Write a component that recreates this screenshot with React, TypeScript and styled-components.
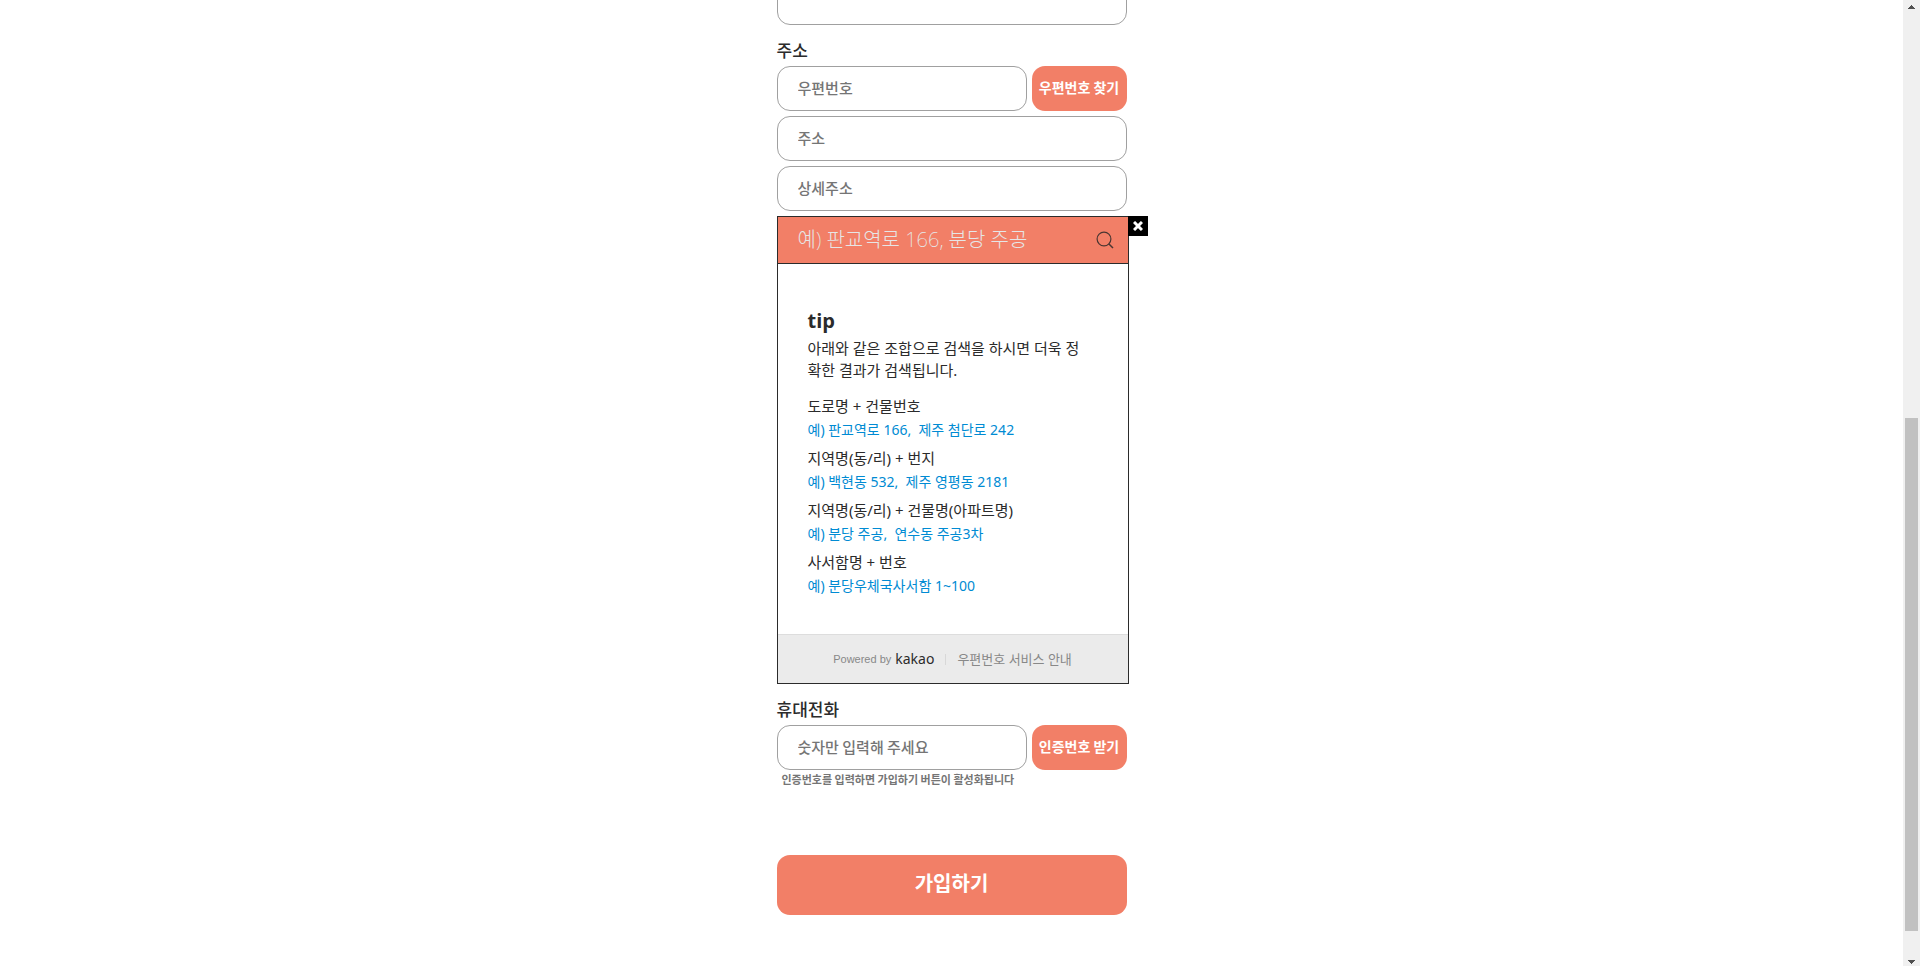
import React from "react";
import styled, { createGlobalStyle } from "styled-components";

const CORAL = "#f27f67";
const INK = "#2b2b2b";

const GlobalStyle = createGlobalStyle`
  *, *::before, *::after { box-sizing: border-box; }
  body {
    margin: 0;
    background: #fff;
    color: ${INK};
    font-family: "Noto Sans CJK KR", sans-serif;
  }
  input, button { font-family: inherit; }
`;

const Page = styled.div`
  display: flex;
  height: 100vh;
  overflow: hidden;
`;

const Main = styled.main`
  flex: 1;
  display: flex;
  justify-content: center;
  align-items: flex-start;
`;

const Form = styled.form`
  width: 350px;
  margin-top: -20px;
`;

const Field = styled.div`
  display: flex;
  flex-direction: column;
  gap: 5px;
`;

const Label = styled.label`
  display: block;
  padding: 13px 0 4px;
  font-size: 17px;
  font-weight: 500;
  line-height: 24px;
`;

const Row = styled.div`
  display: flex;
  gap: 5px;
`;

const TextInput = styled.input`
  flex: 1 0 auto;
  width: 100%;
  height: 45px;
  padding: 0 20px 2px;
  border: 1px solid #a0a0a0;
  border-radius: 13px;
  outline: none;
  background: #fff;
  color: ${INK};
  font-size: 15px;
  font-weight: 500;

  ${Row} & {
    flex: 1;
    width: auto;
    min-width: 0;
  }
  &::placeholder {
    color: #757575;
    opacity: 1;
  }
`;

const ActionButton = styled.button`
  width: 95px;
  height: 45px;
  padding: 0 0 3px;
  border: 0;
  border-radius: 13px;
  background: ${CORAL};
  color: #fff;
  font-size: 14px;
  font-weight: 700;
  white-space: nowrap;
  cursor: pointer;
`;

const SubmitButton = styled.button`
  width: 100%;
  height: 60px;
  margin-top: 67px;
  padding: 0 0 6px;
  border: 0;
  border-radius: 13px;
  background: ${CORAL};
  color: #fff;
  font-size: 20px;
  font-weight: 700;
  cursor: pointer;
`;

const Hint = styled.p`
  margin: 0;
  padding-left: 5px;
  color: #757575;
  font-size: 11px;
  font-weight: 700;
  line-height: 18px;
`;

const Postcode = styled.section`
  position: relative;
  width: 352px;
  margin-top: 5px;
  border: 1px solid ${INK};
  font-family: "Noto Sans", "Noto Sans CJK KR", sans-serif;
`;

const CloseButton = styled.button`
  position: absolute;
  top: -1px;
  left: 100%;
  display: flex;
  align-items: center;
  justify-content: center;
  width: 20px;
  height: 20px;
  padding: 0;
  border: 0;
  background: #000;
  cursor: pointer;
`;

const SearchBar = styled.div`
  display: flex;
  align-items: center;
  height: 47px;
  padding: 0 14px 0 20px;
  border-bottom: 1px solid ${INK};
  background: ${CORAL};
`;

const SearchInput = styled.input`
  flex: 1;
  min-width: 0;
  padding: 0;
  border: 0;
  outline: none;
  background: transparent;
  color: #fff;
  font-size: 20px;
  font-weight: 200;
  line-height: 28px;

  &::placeholder {
    color: #e6e6e6;
    opacity: 1;
  }
`;

const SearchButton = styled.button`
  display: flex;
  padding: 0;
  border: 0;
  background: transparent;
  cursor: pointer;
`;

const Tip = styled.div`
  padding: 40px 36px 33px 30px;
`;

const TipTitle = styled.h2`
  margin: 0;
  font-family: "Open Sans", sans-serif;
  font-size: 20px;
  font-weight: 700;
  line-height: 33px;
`;

const TipText = styled.p`
  margin: 0 0 12px;
  font-size: 15px;
  font-weight: 400;
  line-height: 22px;
  word-break: break-all;
`;

const Examples = styled.dl`
  display: grid;
  margin: 0;
`;

const Pattern = styled.dt`
  font-size: 15px;
  font-weight: 400;
  line-height: 26px;
`;

const Example = styled.dd`
  margin: 0 0 4px;
  color: #008bd3;
  font-size: 14px;
  font-weight: 400;
  line-height: 22px;
  white-space: pre;
`;

const Footer = styled.footer`
  display: flex;
  align-items: center;
  justify-content: center;
  height: 49px;
  border-top: 1px solid #ddd;
  background: #ebebeb;
  color: #888;
`;

const Powered = styled.span`
  font-family: "Liberation Sans", Arial, sans-serif;
  font-size: 11px;
`;

const Brand = styled.a`
  margin-left: 4px;
  color: ${INK};
  font-size: 14px;
  line-height: 20px;
  text-decoration: none;
`;

const Divider = styled.span`
  width: 1px;
  height: 11px;
  margin: 0 11px;
  background: #d8d8d8;
`;

const ServiceLink = styled.a`
  color: #888;
  font-size: 13px;
  font-weight: 400;
  line-height: 20px;
  text-decoration: none;
`;

const ScrollBar = styled.aside`
  display: flex;
  flex-direction: column;
  align-items: center;
  width: 17px;
  background: #f0f0f0;
`;

const ScrollArrow = styled.svg`
  flex: none;
  display: block;
  width: 17px;
  height: 17px;
  fill: #505050;
`;

const Track = styled.div<{ $size: number }>`
  flex: ${(p) => p.$size} 0 0;
`;

const Thumb = styled(Track)`
  width: 13px;
  background: #c1c1c1;
`;

const examples = [
  ["도로명 + 건물번호", "예) 판교역로 166,  제주 첨단로 242"],
  ["지역명(동/리) + 번지", "예) 백현동 532,  제주 영평동 2181"],
  ["지역명(동/리) + 건물명(아파트명)", "예) 분당 주공,  연수동 주공3차"],
  ["사서함명 + 번호", "예) 분당우체국사서함 1~100"],
];

function PostcodeSearch() {
  return (
    <Postcode aria-label="우편번호 찾기">
      <SearchBar>
        <SearchInput type="text" aria-label="주소 검색" placeholder="예) 판교역로 166, 분당 주공" />
        <SearchButton type="button" aria-label="검색">
          <svg width="18" height="18" viewBox="0 0 18 18" fill="none" stroke="#4a3632" strokeWidth="1.2">
            <circle cx="8" cy="8" r="6.9" />
            <path d="M12.7 12.7L17 17" strokeWidth="1.5" />
          </svg>
        </SearchButton>
      </SearchBar>
      <Tip>
        <TipTitle>tip</TipTitle>
        <TipText>아래와 같은 조합으로 검색을 하시면 더욱 정확한 결과가 검색됩니다.</TipText>
        <Examples>
          {examples.map(([pattern, example]) => (
            <React.Fragment key={pattern}>
              <Pattern>{pattern}</Pattern>
              <Example>{example}</Example>
            </React.Fragment>
          ))}
        </Examples>
      </Tip>
      <Footer>
        <Powered>Powered by</Powered>
        <Brand href="#kakao">kakao</Brand>
        <Divider />
        <ServiceLink href="#guide">우편번호 서비스 안내</ServiceLink>
      </Footer>
      <CloseButton type="button" aria-label="닫기">
        <svg width="10" height="10" viewBox="0 0 10 10" stroke="#fff" strokeWidth="3">
          <path d="M1 1L9 9M9 1L1 9" />
        </svg>
      </CloseButton>
    </Postcode>
  );
}

export default function App() {
  return (
    <Page>
      <GlobalStyle />
      <Main>
        <Form onSubmit={(e) => e.preventDefault()}>
          <Field>
            <TextInput type="text" aria-label="이름" />
          </Field>

          <Label htmlFor="zip">주소</Label>
          <Field>
            <Row>
              <TextInput id="zip" type="text" placeholder="우편번호" />
              <ActionButton type="button">우편번호 찾기</ActionButton>
            </Row>
            <TextInput type="text" aria-label="주소" placeholder="주소" />
            <TextInput type="text" aria-label="상세주소" placeholder="상세주소" />
          </Field>
          <PostcodeSearch />

          <Label htmlFor="phone">휴대전화</Label>
          <Row>
            <TextInput id="phone" type="tel" placeholder="숫자만 입력해 주세요" />
            <ActionButton type="button">인증번호 받기</ActionButton>
          </Row>
          <Hint>인증번호를 입력하면 가입하기 버튼이 활성화됩니다</Hint>

          <SubmitButton type="submit">가입하기</SubmitButton>
        </Form>
      </Main>
      <ScrollBar aria-hidden="true">
        <ScrollArrow viewBox="0 0 17 17">
          <path d="M8 5h1v1h1v1h1v1h1v1H5V8h1V7h1V6h1z" />
        </ScrollArrow>
        <Track $size={401} />
        <Thumb $size={513} />
        <Track $size={18} />
        <ScrollArrow viewBox="0 0 17 17">
          <path d="M5 11h7v1h-1v1h-1v1H9v1H8v-1H7v-1H6v-1H5z" />
        </ScrollArrow>
      </ScrollBar>
    </Page>
  );
}
